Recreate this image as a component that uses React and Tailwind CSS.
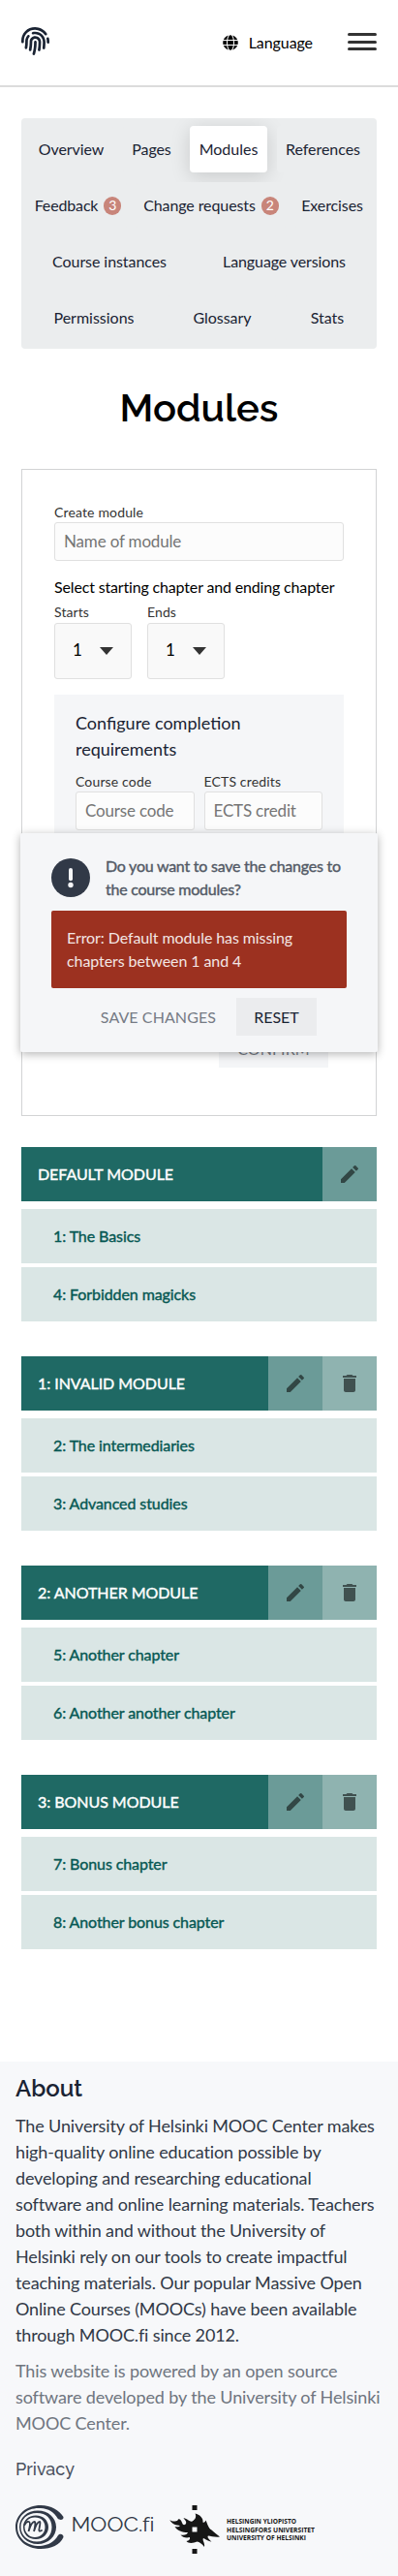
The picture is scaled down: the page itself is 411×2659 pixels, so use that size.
import React from "react";
import { FaFingerprint, FaGlobe } from "react-icons/fa";
import { MdDelete, MdEdit } from "react-icons/md";

const navRows = [
  [
    { label: "Overview", width: "w-[87px]", tracking: "tracking-[-0.1px]" },
    { label: "Pages", width: "w-[59px]", tracking: "tracking-[-0.1px]" },
    { label: "Modules", width: "w-[80px]", tracking: "tracking-normal", active: true },
    { label: "References", width: "w-[95px]", tracking: "tracking-[-0.05px]" },
  ],
  [
    { label: "Feedback", width: "w-[101px]", tracking: "tracking-[-0.15px]", count: 3 },
    { label: "Change requests", width: "w-[154px]", tracking: "tracking-[-0.1px]", count: 2 },
    { label: "Exercises", width: "w-[76px]", tracking: "tracking-[-0.1px]" },
  ],
  [
    { label: "Course instances", width: "w-[166px]", tracking: "tracking-[-0.07px]" },
    { label: "Language versions", width: "w-[175px]", tracking: "tracking-[-0.1px]" },
  ],
  [
    { label: "Permissions", width: "w-[134px]", tracking: "tracking-normal" },
    { label: "Glossary", width: "w-[111px]", tracking: "tracking-[-0.05px]" },
    { label: "Stats", width: "w-[86px]", tracking: "tracking-[-0.05px]" },
  ],
];

const modules = [
  { name: "DEFAULT MODULE", chapters: ["1: The Basics", "4: Forbidden magicks"], fixed: true },
  { name: "1: INVALID MODULE", chapters: ["2: The intermediaries", "3: Advanced studies"] },
  { name: "2: ANOTHER MODULE", chapters: ["5: Another chapter", "6: Another another chapter"] },
  { name: "3: BONUS MODULE", chapters: ["7: Bonus chapter", "8: Another bonus chapter"] },
];

function Header() {
  return (
    <header className="flex h-[90px] items-start border-b-2 border-[#dcdcdc] px-[22px]">
      <FaFingerprint className="mt-7 h-[29px] w-[29px] text-[#1a2333]" />
      <button className="mt-8 ml-auto flex h-6 items-center text-base leading-6 tracking-[-0.08px] text-black">
        <FaGlobe className="mr-[11px] h-4 w-4" />
        Language
      </button>
      <div className="mt-[34px] ml-[36px] flex w-[30px] flex-col gap-[4.5px]">
        <span className="h-[3px] rounded-full bg-[#333]" />
        <span className="h-[3px] rounded-full bg-[#333]" />
        <span className="h-[3px] rounded-full bg-[#333]" />
      </div>
    </header>
  );
}

function NavItem({ item }) {
  return (
    <a
      className={`${item.width} ${item.tracking} m-[5px] flex h-12 shrink-0 items-center justify-center rounded-[4px] whitespace-nowrap text-base text-[#1a2333] ${
        item.active ? "bg-white shadow-[0_4px_20px_rgba(0,0,0,0.15)]" : "bg-[#ebedee]"
      }`}
    >
      {item.label}
      {item.count && (
        <span className="ml-1.5 flex h-[19px] w-[18px] items-center justify-center rounded-full bg-[#c8857a] text-sm text-white">
          {item.count}
        </span>
      )}
    </a>
  );
}

function Field({ label, placeholder }) {
  return (
    <label className="block min-w-0 flex-1 text-sm leading-5 tracking-[0.15px] text-[#333]">
      {label}
      <input
        placeholder={placeholder}
        className="block h-10 w-full rounded-[3px] border border-[#e0e0e0] bg-[#fcfcfc] px-[9px] pb-px text-[17px] tracking-[-0.17px] placeholder:text-[#757575]"
      />
    </label>
  );
}

function ChapterSelect({ label }) {
  return (
    <div className="w-20">
      <div className="mb-px text-sm leading-[21px] tracking-[0.1px] text-[#333]">{label}</div>
      <div className="flex h-[58px] items-center justify-between rounded-[3px] border border-[#e0e0e0] bg-[#f9f9f9] pr-[18px] pl-[18px] text-[17px] leading-[27px] text-black">
        <span className="mb-1">1</span>
        <svg className="h-2 w-[14px]" viewBox="0 0 14 8">
          <path d="M0 0h14L7 8z" fill="#333" />
        </svg>
      </div>
    </div>
  );
}

function ModuleForm() {
  return (
    <section className="mt-[39px] h-[668px] border border-[#d2d3d4] px-[33px] pt-[34px]">
      <div className="flex">
        <Field label="Create module" placeholder="Name of module" />
      </div>
      <p className="mt-[15px] text-base leading-6 tracking-[-0.16px] whitespace-nowrap text-black">
        Select starting chapter and ending chapter
      </p>
      <div className="mt-[3px] flex gap-4">
        <ChapterSelect label="Starts" />
        <ChapterSelect label="Ends" />
      </div>
      <div className="mt-4 h-[320px] bg-[#f5f6f8] px-[22px] pt-4">
        <h2 className="text-[18px] leading-[27px] text-[#1a2333]">
          Configure completion
          <br />
          requirements
        </h2>
        <div className="mt-[10px] flex gap-[10px]">
          <Field label="Course code" placeholder="Course code" />
          <Field label="ECTS credits" placeholder="ECTS credit" />
        </div>
      </div>
      <div className="mt-[26px] mr-4 flex justify-end">
        <button className="h-[39px] w-[113px] bg-[#f4f5f7] text-base tracking-[0.1px] text-[#767b85]">CONFIRM</button>
      </div>
    </section>
  );
}

function SaveDialog() {
  return (
    <div
      role="dialog"
      className="absolute top-[860px] left-[21px] h-[226px] w-[369px] rounded-[2px] bg-[#f5f6f8] px-8 pt-[22px] shadow-[0_2px_10px_rgba(0,0,0,0.3)]"
    >
      <div className="flex">
        <svg className="mt-1 h-10 w-10 shrink-0" viewBox="0 0 40 40">
          <circle cx="20" cy="20" r="20" fill="#313947" />
          <rect x="18" y="10" width="4" height="13.3" rx="2" fill="#f5f6f8" />
          <circle cx="20" cy="27.5" r="2.7" fill="#f5f6f8" />
        </svg>
        <p className="ml-4 text-base leading-6 tracking-[-0.24px] whitespace-nowrap text-[#535a66] [-webkit-text-stroke:0.4px_#535a66]">
          Do you want to save the changes to
          <br />
          the course modules?
        </p>
      </div>
      <div className="mt-[10px] h-20 w-[305px] rounded-[2px] bg-[#9c3120] p-4 text-base leading-6 tracking-[-0.09px] text-[#f3e6e4]">
        Error: Default module has missing
        <br />
        chapters between 1 and 4
      </div>
      <div className="mt-[10px] mr-[31px] flex justify-end text-base">
        <button className="mr-[21px] h-[39px] tracking-[0.08px] text-[#767b85]">SAVE CHANGES</button>
        <button className="h-[39px] w-[83px] bg-[#ebecee] text-[#1a2333]">RESET</button>
      </div>
    </div>
  );
}

function ModuleCard({ module }) {
  return (
    <section>
      <div className="flex h-14 bg-[#1f6964]">
        <h3 className="flex-1 pl-[17px] text-base leading-[55px] tracking-[-0.05px] text-white [-webkit-text-stroke:0.4px_#fff]">
          {module.name}
        </h3>
        <button className="flex w-14 items-center justify-center bg-[#6b9b98]">
          <MdEdit className="h-6 w-6 text-[#324745]" />
        </button>
        {!module.fixed && (
          <button className="flex w-14 items-center justify-center bg-[#8fb3b0]">
            <MdDelete className="h-6 w-6 text-[#405150]" />
          </button>
        )}
      </div>
      <ul className="mt-2 flex flex-col gap-1">
        {module.chapters.map((chapter) => (
          <li
            key={chapter}
            className="h-14 bg-[#dae6e5] pl-[33px] text-base leading-[55px] tracking-[-0.09px] text-[#065853] [-webkit-text-stroke:0.4px_#065853]"
          >
            {chapter}
          </li>
        ))}
      </ul>
    </section>
  );
}

function MoocLogo() {
  return (
    <svg className="h-[45px] w-[144px] overflow-visible" viewBox="0 0 144 45">
      <g fill="#313947">
        <path
          fillRule="evenodd"
          d="M49.500 12C45 5 37 0 26 0C11 0 0 10 0 22.500C0 35 11 45 26 45C37 45 46 41 49.500 33C50 30 46 28.500 44 31C40 38 34 41 26 42C12 42.500 2 34 2 22.500C2 11 12 2 26 3C34 3.500 40 7 43.500 13.500C46 16 50 15 49.500 12Z"
        />
        <path
          fillRule="evenodd"
          d="M23 5.500C34 5.500 42 13 42 22.500S34 40 23 40S4 32 4 22.500S12 5.500 23 5.500ZM22 8C12 8 5.500 14.500 5.500 22.500S12 37.500 22 37.500S37.500 31 37.500 22.500S32 8 22 8Z"
        />
        <path
          fillRule="evenodd"
          d="M21 10.500C29 10.500 34 16 34 22.500S29 35 21 35S8 29.500 8 22.500S13 10.500 21 10.500ZM20 12.500C13.500 12.500 9.500 17 9.500 22.500S14 33 20 33S30.500 28.500 30.500 22.500S26.500 12.500 20 12.500Z"
        />
      </g>
      <path
        d="M9.500 20q2-4 4.500-3q2 1-.5 10q3-10 6-10q2 0-.5 10q3-10 6-10q1 0-.5 7q-1 4 2.500 2"
        fill="none"
        stroke="#313947"
        strokeWidth="1.800"
        strokeLinecap="round"
      />
      <text
        x="57.500"
        y="27"
        textLength="86"
        lengthAdjust="spacingAndGlyphs"
        className="fill-[#313947] font-['Raleway',sans-serif] text-[21px] font-normal [font-variant-ligatures:none]"
      >
        MOOC.fi
      </text>
    </svg>
  );
}

function HelsinkiLogo() {
  return (
    <svg className="ml-[15px] h-[50px] w-[154px] overflow-visible" viewBox="0 0 154 50">
      <g fill="#161616">
        <path d="M23.500 0h5v5h-5zM23.500 45h5v5h-5z" />
        <path
          fillRule="evenodd"
          d="M.3 15C3.500 17.500 7 16.500 8.500 15.500C9.500 12.500 12.500 15.500 13 18C14 21 16 20.500 17 19C18 16.500 15.500 15 14.500 13C19 14 21 17.500 23.500 16.500C27 14.500 28 11.500 26.500 8.500C31 9.500 35 13 34.500 17.500C36 18.500 37 16.500 37.500 15.500C39.500 19.500 40 23.500 43.500 25.500C46 28 49 30 52 32.500C47 33.500 43 31.500 40 31.500C38.500 33 41 35.500 43.500 37.500C39 37 37 34.500 35 34C33.500 36 37 39 36 43C33.500 39.500 31 38 28.500 37.500C25 39 20 40 17.500 37C20.500 36.500 21.500 35 21 33C17 34 13.500 33 11.500 30.500C15.500 31.500 18.500 30 19 28C13 28 8 26 5.500 22C8 22.500 10 22.500 11 21C7 20.500 3 20 .3 15ZM23.500 22.500v5h5v-5z"
        />
      </g>
      <g className="fill-[#161616] font-['Open_Sans',sans-serif] text-[7.5px] font-bold">
        <text x="59" y="19" textLength="72" lengthAdjust="spacingAndGlyphs">HELSINGIN YLIOPISTO</text>
        <text x="59" y="27.500" textLength="91" lengthAdjust="spacingAndGlyphs">HELSINGFORS UNIVERSITET</text>
        <text x="59" y="36" textLength="82" lengthAdjust="spacingAndGlyphs">UNIVERSITY OF HELSINKI</text>
      </g>
    </svg>
  );
}

function Footer() {
  return (
    <footer className="mt-[116px] h-[531px] bg-[#f7f8fa] px-4 pt-4 text-[18px] leading-[27px]">
      <h2 className="mb-[13px] font-['Raleway',sans-serif] text-2xl leading-6 font-semibold text-[#1a2333]">About</h2>
      <p className="tracking-[-0.14px] whitespace-nowrap text-[#313947]">
        The University of Helsinki MOOC Center makes
        <br />
        high-quality online education possible by
        <br />
        developing and researching educational
        <br />
        software and online learning materials. Teachers
        <br />
        both within and without the University of
        <br />
        Helsinki rely on our tools to create impactful
        <br />
        teaching materials. Our popular Massive Open
        <br />
        Online Courses (MOOCs) have been available
        <br />
        through MOOC.fi since 2012.
      </p>
      <p className="mt-[10px] tracking-[-0.12px] whitespace-nowrap text-[#6f757f]">
        This website is powered by an open source
        <br />
        software developed by the University of Helsinki
        <br />
        MOOC Center.
      </p>
      <a className="mt-5 block font-['Raleway',sans-serif] font-medium text-[#4b5260]">Privacy</a>
      <div className="mt-6 flex">
        <MoocLogo />
        <HelsinkiLogo />
      </div>
    </footer>
  );
}

export default function App() {
  return (
    <div className="relative h-[2659px] w-[411px] overflow-hidden bg-white font-['Lato',sans-serif]">
      <Header />
      <main className="mt-8 px-[22px]">
        <nav className="h-[238px] overflow-hidden rounded-[4px] bg-[#ebedee] p-[3px]">
          {navRows.map((row, index) => (
            <div key={index} className="flex">
              {row.map((item) => (
                <NavItem key={item.label} item={item} />
              ))}
            </div>
          ))}
        </nav>
        <h1 className="mt-[37px] text-center font-['Raleway',sans-serif] text-[40px] leading-[48px] font-semibold text-black">
          Modules
        </h1>
        <ModuleForm />
        <div className="mt-8 flex flex-col gap-9">
          {modules.map((module) => (
            <ModuleCard key={module.name} module={module} />
          ))}
        </div>
      </main>
      <Footer />
      <SaveDialog />
    </div>
  );
}
